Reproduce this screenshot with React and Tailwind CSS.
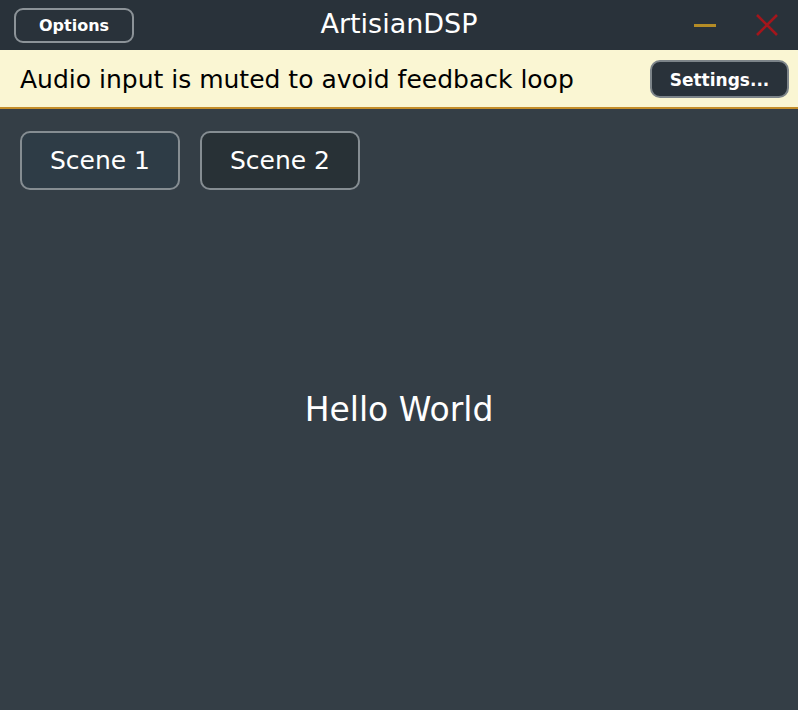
import React from 'react';

const font = { fontFamily: '"DejaVu Sans", Verdana, sans-serif' };

const App = () => {
    return (
        <div className="w-[798px] h-[710px] flex flex-col bg-[#343e46] text-white" style={font}>
            {/* title bar */}
            <div className="h-[50px] grid grid-cols-[1fr_auto_1fr] items-center bg-[#29323a] px-[14px]">
                <div>
                    <button className="w-[120px] h-[35px] rounded-[9px] border-2 border-[#8c9398] text-[16px] font-bold pt-[2px]">
                        Options
                    </button>
                </div>
                <div className="text-[27px] pb-[2px]">ArtisianDSP</div>
                <div className="flex items-center justify-end gap-[40px] pr-[6px]">
                    <div className="w-[22px] h-[3px] bg-[#b48c26]" />
                    <svg width="22" height="22" viewBox="0 0 22 22">
                        <path d="M1 1 L21 21 M21 1 L1 21" stroke="#a3161c" strokeWidth="2.6" />
                    </svg>
                </div>
            </div>

            {/* feedback banner */}
            <div className="h-[59px] flex items-center justify-between bg-[#faf6d3] border-b-2 border-[#c48e2a] pl-[20px] pr-[9px]">
                <span className="text-[25px] text-black pt-[3px]">Audio input is muted to avoid feedback loop</span>
                <button className="w-[139px] h-[38px] rounded-[10px] bg-[#29323a] border-2 border-[#7c8489] text-[17px] font-bold text-white pt-[4px]">
                    Settings...
                </button>
            </div>

            {/* scenes */}
            <div className="flex gap-[20px] px-[20px] pt-[22px]">
                <button className="w-[160px] h-[59px] rounded-[10px] bg-[#2e3c46] border-2 border-[#858d92] text-[25px]">
                    Scene 1
                </button>
                <button className="w-[160px] h-[59px] rounded-[10px] bg-[#283136] border-2 border-[#858d92] text-[25px]">
                    Scene 2
                </button>
            </div>

            <div className="flex-1 flex items-center justify-center pb-[80px]">
                <span className="text-[33px]">Hello World</span>
            </div>
        </div>
    );
};

export default App;
